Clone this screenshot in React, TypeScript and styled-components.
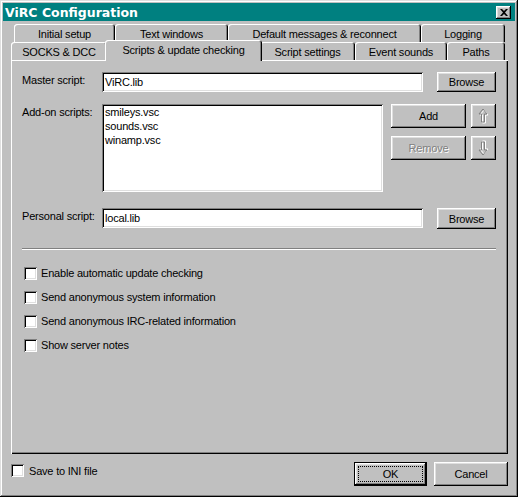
import * as React from "react";
import styled, { createGlobalStyle } from "styled-components";

const GlobalStyle = createGlobalStyle`
html, body {
  margin: 0;
  padding: 0;
  background: #c0c0c0;
}
body {
  font-family: "Liberation Sans", Arial, sans-serif;
  font-size: 11px;
  letter-spacing: -0.2px;
  color: #000;
}
`

const raised = `box-shadow: inset -1px -1px #000, inset 1px 1px #fff, inset -2px -2px #808080, inset 2px 2px #dfdfdf;`
const sunken = `box-shadow: inset 1px 1px #808080, inset -1px -1px #fff, inset 2px 2px #000, inset -2px -2px #dfdfdf;`

const Window = styled.div`
width: 518px;
height: 497px;
box-sizing: border-box;
padding: 3px;
background: #c0c0c0;
box-shadow: inset -1px -1px #000, inset 1px 1px #dfdfdf, inset -2px -2px #808080, inset 2px 2px #fff;
display: flex;
flex-direction: column;
`
const TitleBar = styled.div`
height: 18px;
background: #008080;
display: flex;
align-items: center;
justify-content: space-between;
padding: 0 4px 0 2px;
`
const Title = styled.span`
color: #fff;
font-family: "DejaVu Sans", Verdana, sans-serif;
font-weight: bold;
font-size: 12.5px;
letter-spacing: 0;
`
const CloseButton = styled.div`
width: 15px;
height: 13px;
background: #c0c0c0;
${raised}
display: flex;
align-items: center;
justify-content: center;
`
const Body = styled.div`
padding: 3px 7px 0 8px;
display: flex;
flex-direction: column;
`
const TabRow = styled.div<{ $indent: number }>`
display: flex;
height: 18px;
margin-left: ${p => p.$indent}px;
`
const Tab = styled.div<{ $w: number; $active?: boolean }>`
width: ${p => p.$w}px;
flex-shrink: 0;
box-sizing: border-box;
display: flex;
align-items: center;
justify-content: center;
background: #c0c0c0;
border-radius: 3px 3px 0 0;
box-shadow: inset 1px 1px #fff, inset -1px 0 #000, inset -2px 0 #808080;
padding-top: 1px;
white-space: nowrap;
${p => p.$active && `
  width: ${p.$w + 4}px;
  height: 21px;
  margin: -2px -2px 0;
  padding-top: 0;
  padding-bottom: 2px;
  position: relative;
  z-index: 1;
  box-shadow: inset 1px 1px #fff, inset -1px 0 #000, inset -2px 0 #808080;
`}
`
const Panel = styled.div`
height: 394px;
box-sizing: border-box;
padding: 12px 12px 0 11px;
box-shadow: inset 1px 1px #fff, inset -1px -1px #000, inset -2px -2px #808080;
display: flex;
flex-direction: column;
`
const FieldRow = styled.div<{ $gap?: number }>`
display: flex;
align-items: flex-start;
margin-top: ${p => p.$gap ?? 0}px;
`
const FieldLabel = styled.div`
width: 80px;
flex-shrink: 0;
line-height: 14px;
margin-top: 1px;
`
const TextField = styled.div`
width: 321px;
height: 20px;
box-sizing: border-box;
background: #fff;
${sunken}
padding: 0 3px;
line-height: 20px;
`
const ListBox = styled.div`
width: 281px;
height: 88px;
box-sizing: border-box;
background: #fff;
${sunken}
padding: 1px 3px 0;
line-height: 14px;
`
const Button = styled.div<{ $w: number; $h?: number; $disabled?: boolean; $ml?: number }>`
width: ${p => p.$w}px;
height: ${p => p.$h ?? 24}px;
margin-left: ${p => p.$ml ?? 0}px;
flex-shrink: 0;
box-sizing: border-box;
background: #c0c0c0;
${raised}
display: flex;
align-items: center;
justify-content: center;
color: ${p => (p.$disabled ? "#808080" : "#000")};
text-shadow: ${p => (p.$disabled ? "1px 1px #fff" : "none")};
`
const DefaultButton = styled(Button)`
position: relative;
box-shadow: inset 0 0 0 1px #000, inset -2px -2px #000, inset 2px 2px #fff, inset -3px -3px #808080, inset 3px 3px #dfdfdf;
&::after {
  content: "";
  position: absolute;
  inset: 4px;
  border: 1px dotted #000;
}
`
const ButtonGrid = styled.div`
display: grid;
grid-template-columns: 75px 25px;
grid-auto-rows: 24px;
column-gap: 5px;
row-gap: 8px;
margin-left: 8px;
`
const Separator = styled.div`
margin-top: 19px;
border-top: 1px solid #808080;
border-bottom: 1px solid #fff;
`
const CheckList = styled.div`
margin-top: 11px;
display: flex;
flex-direction: column;
`
const CheckRow = styled.div`
height: 24px;
display: flex;
align-items: center;
padding-left: 2px;
`
const Box = styled.div`
width: 13px;
height: 13px;
box-sizing: border-box;
background: #fff;
${sunken}
flex-shrink: 0;
margin-right: 4px;
`
const Footer = styled.div`
display: flex;
align-items: flex-start;
margin-top: 8px;
height: 24px;
`
const SaveCheck = styled.div`
display: flex;
align-items: center;
margin-top: 1px;
height: 15px;
flex: 1;
`
const FooterButtons = styled.div`
display: flex;
gap: 7px;
`

const Arrow = ({ down }: { down?: boolean }) => {
  const pts = "4.5,0.5 8.5,5.5 6,5.5 6,13.5 3,13.5 3,5.5 0.5,5.5"
  return (
    <svg width="11" height="16" viewBox="0 0 11 16" style={{ transform: down ? "scaleY(-1)" : undefined }}>
      <polygon points={pts} transform="translate(1.5,1.5)" fill="none" stroke="#fff" strokeWidth="1" />
      <polygon points={pts} transform="translate(0.5,0.5)" fill="none" stroke="#808080" strokeWidth="1" />
    </svg>
  )
}

const CheckItem = ({ label }: { label: string }) => (
  <CheckRow>
    <Box />
    <span>{label}</span>
  </CheckRow>
)

const App: React.FC = () => {
  return (
    <>
      <GlobalStyle />
      <Window>
        <TitleBar>
          <Title>ViRC Configuration</Title>
          <CloseButton>
            <svg width="8" height="7" viewBox="0 0 8 7">
              <path d="M0 0h2l2 2 2-2h2L5 3.5 8 7H6L4 5 2 7H0l3-3.5z" fill="#000" />
            </svg>
          </CloseButton>
        </TitleBar>
        <Body>
          <TabRow $indent={3}>
            <Tab $w={101}>Initial setup</Tab>
            <Tab $w={113}>Text windows</Tab>
            <Tab $w={193}>Default messages &amp; reconnect</Tab>
            <Tab $w={84}>Logging</Tab>
          </TabRow>
          <TabRow $indent={0}>
            <Tab $w={96}>SOCKS &amp; DCC</Tab>
            <Tab $w={153} $active>Scripts &amp; update checking</Tab>
            <Tab $w={95}>Script settings</Tab>
            <Tab $w={92}>Event sounds</Tab>
            <Tab $w={58}>Paths</Tab>
          </TabRow>
          <Panel>
            <FieldRow>
              <FieldLabel>Master script:</FieldLabel>
              <TextField>ViRC.lib</TextField>
              <Button $w={59} $h={20} $ml={14}>Browse</Button>
            </FieldRow>
            <FieldRow $gap={12}>
              <FieldLabel>Add-on scripts:</FieldLabel>
              <ListBox>
                <div>smileys.vsc</div>
                <div>sounds.vsc</div>
                <div>winamp.vsc</div>
              </ListBox>
              <ButtonGrid>
                <Button $w={75}>Add</Button>
                <Button $w={25}><Arrow /></Button>
                <Button $w={75} $disabled>Remove</Button>
                <Button $w={25}><Arrow down /></Button>
              </ButtonGrid>
            </FieldRow>
            <FieldRow $gap={16}>
              <FieldLabel>Personal script:</FieldLabel>
              <TextField>local.lib</TextField>
              <Button $w={59} $h={21} $ml={14}>Browse</Button>
            </FieldRow>
            <Separator />
            <CheckList>
              <CheckItem label="Enable automatic update checking" />
              <CheckItem label="Send anonymous system information" />
              <CheckItem label="Send anonymous IRC-related information" />
              <CheckItem label="Show server notes" />
            </CheckList>
          </Panel>
          <Footer>
            <SaveCheck>
              <Box style={{ marginRight: 5 }} />
              <span>Save to INI file</span>
            </SaveCheck>
            <FooterButtons>
              <DefaultButton $w={73}>OK</DefaultButton>
              <Button $w={74}>Cancel</Button>
            </FooterButtons>
          </Footer>
        </Body>
      </Window>
    </>
  )
}

export default App
